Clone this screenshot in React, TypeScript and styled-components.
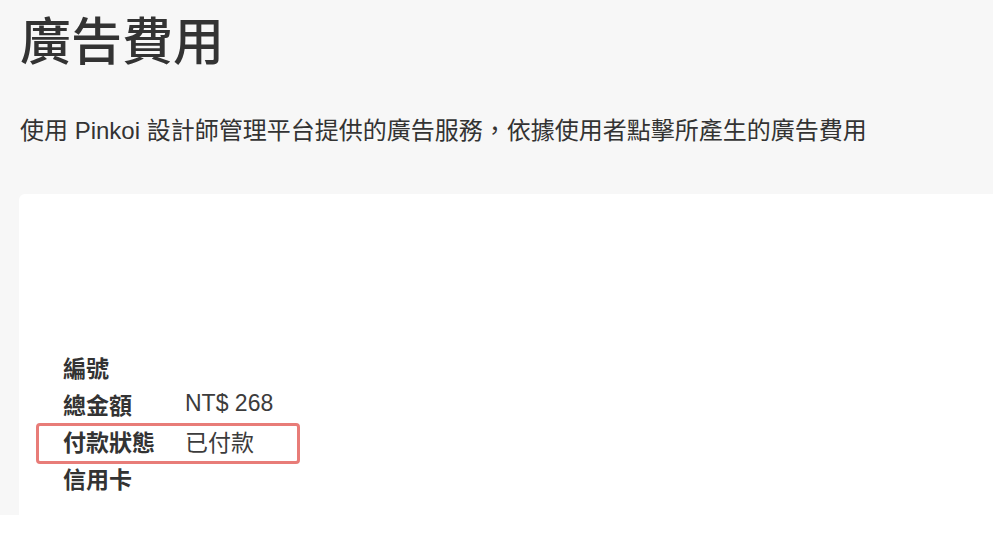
import { Fragment } from 'react';
import styled, { createGlobalStyle } from 'styled-components';

interface InfoRow {
  label: string;
  value?: string;
  highlighted?: boolean;
}

const rows: InfoRow[] = [
  { label: '編號' },
  { label: '總金額', value: 'NT$ 268' },
  { label: '付款狀態', value: '已付款', highlighted: true },
  { label: '信用卡' },
];

const GlobalStyle = createGlobalStyle`
  body {
    margin: 0;
    background: #ffffff;
    font-family: 'Liberation Sans', 'Noto Sans CJK TC', sans-serif;
    color: #333333;
  }
`;

const Page = styled.main`
  box-sizing: border-box;
  width: 993px;
  height: 515px;
  padding-left: 19px;
  background: #f7f7f7;
  display: flex;
  flex-direction: column;
  overflow: hidden;
`;

const Title = styled.h1`
  margin: 13px 0 0 1px;
  font-size: 51px;
  line-height: 60px;
  font-weight: 500;
  color: #333333;
`;

const Description = styled.p`
  margin: 42px 0 0 1px;
  font-size: 24px;
  line-height: 32px;
  color: #333333;
`;

const Card = styled.section`
  flex: 1;
  margin-top: 47px;
  padding: 154px 0 0 44px;
  background: #ffffff;
  border-top-left-radius: 6px;
`;

const InfoTable = styled.div`
  position: relative;
  display: grid;
  grid-template-columns: 122px auto;
  grid-auto-rows: 37px;
  align-items: center;
  width: max-content;
`;

const Label = styled.div`
  font-size: 23px;
  font-weight: 700;
  color: #333333;
`;

const Value = styled.div`
  font-size: 23px;
  color: #3c3c3c;
  white-space: nowrap;
`;

const Highlight = styled.div<{ $row: number }>`
  position: absolute;
  left: -27px;
  top: ${({ $row }) => $row * 37 + 1}px;
  width: 264px;
  height: 41px;
  box-sizing: border-box;
  border: 3px solid #e87c78;
  border-radius: 4px;
  pointer-events: none;
`;

export default function App() {
  const highlightIndex = rows.findIndex((row) => row.highlighted);
  return (
    <>
      <GlobalStyle />
      <Page>
        <Title>廣告費用</Title>
        <Description>
          使用 Pinkoi 設計師管理平台提供的廣告服務，依據使用者點擊所產生的廣告費用
        </Description>
        <Card>
          <InfoTable>
            {rows.map((row) => (
              <Fragment key={row.label}>
                <Label>{row.label}</Label>
                <Value>{row.value ?? ''}</Value>
              </Fragment>
            ))}
            {highlightIndex >= 0 && <Highlight $row={highlightIndex} />}
          </InfoTable>
        </Card>
      </Page>
    </>
  );
}
